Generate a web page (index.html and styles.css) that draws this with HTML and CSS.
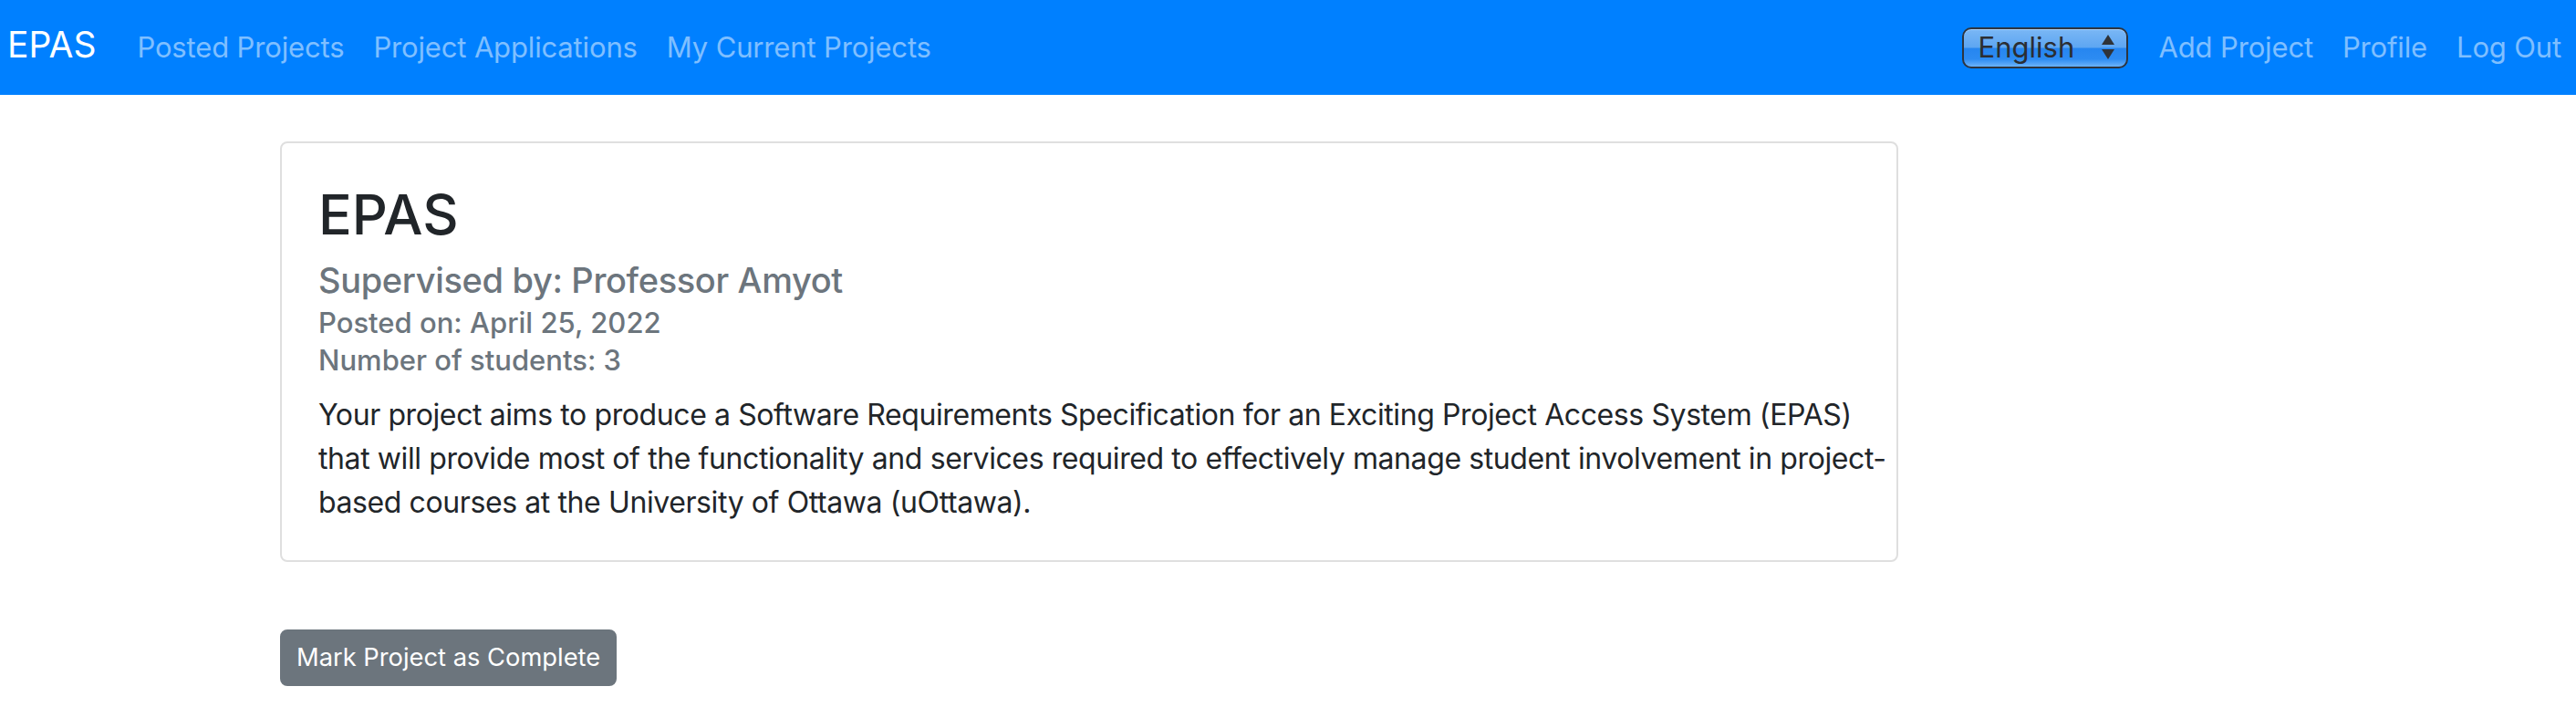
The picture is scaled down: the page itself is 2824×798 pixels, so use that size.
FILE: index.html
```html
<!DOCTYPE html>
<html lang="en">
<head>
<meta charset="utf-8">
<title>EPAS</title>
<link rel="stylesheet" href="styles.css">
</head>
<body>
<nav class="navbar">
  <a class="brand" href="#">EPAS</a>
  <ul class="nav nav-left">
    <li><a class="nav-link" href="#">Posted Projects</a></li>
    <li><a class="nav-link" href="#">Project Applications</a></li>
    <li><a class="nav-link" href="#">My Current Projects</a></li>
  </ul>
  <ul class="nav nav-right">
    <li class="lang-item">
      <div class="lang-select">
        <span class="lang-text">English</span>
        <svg class="lang-arrows" width="16" height="30" viewBox="0 0 16 30" aria-hidden="true">
          <polygon points="8,1 15,12 1,12" fill="#2f3338"/>
          <polygon points="1,17 15,17 8,28" fill="#2f3338"/>
        </svg>
      </div>
    </li>
    <li><a class="nav-link" href="#">Add Project</a></li>
    <li><a class="nav-link" href="#">Profile</a></li>
    <li><a class="nav-link" href="#">Log Out</a></li>
  </ul>
</nav>
<main class="main">
  <div class="card">
    <div class="card-body">
      <h2 class="card-title">EPAS</h2>
      <h5 class="card-subtitle">Supervised by: Professor Amyot</h5>
      <h6 class="card-meta">Posted on: April 25, 2022</h6>
      <h6 class="card-meta card-meta-last">Number of students: 3</h6>
      <p class="card-text">Your project aims to produce a Software Requirements Specification for an Exciting Project Access System (EPAS) that will provide most of the functionality and services required to effectively manage student involvement in project-based courses at the University of Ottawa (uOttawa).</p>
    </div>
  </div>
  <button class="btn-complete" type="button">Mark Project as Complete</button>
</main>
</body>
</html>
```
FILE: styles.css
```css
* { box-sizing: border-box; }
html, body { margin: 0; padding: 0; }
body {
  font-family: Inter, "Noto Sans", "Liberation Sans", sans-serif;
  font-size: 32px;
  line-height: 48px;
  color: #212529;
  background: #fff;
}
.navbar {
  height: 104px;
  background: #0080ff;
  display: flex;
  align-items: center;
  padding: 0 0 0 8px;
}
.brand {
  color: #fff;
  font-size: 39px;
  line-height: 48px;
  text-decoration: none;
  margin-right: 29px;
  margin-bottom: 6px;
}
.nav {
  list-style: none;
  margin: 0;
  padding: 0;
  display: flex;
  align-items: center;
}
.nav-right { margin-left: auto; }
.nav-link {
  display: block;
  padding: 0 16px;
  color: rgba(255,255,255,.5);
  text-decoration: none;
  font-size: 31px;
  letter-spacing: -0.15px;
  line-height: 48px;
}
.lang-item { margin-right: 18px; }
.lang-select {
  width: 182px;
  height: 45px;
  border: 2px solid #2d3540;
  border-radius: 10px;
  display: flex;
  align-items: center;
  justify-content: space-between;
  padding: 0 12px 0 16px;
  background: linear-gradient(to bottom, #7ab7f5 0%, #5ea6f2 48%, #2686f0 52%, #2d8cf2 80%, #6bb3fa 100%);
  box-shadow: inset 0 1px 0 rgba(255,255,255,.35);
}
.lang-text {
  color: #2b2e33;
  font-size: 31px;
  line-height: 40px;
}
.lang-arrows { display: block; }
.main {
  padding: 51px 0 0 307px;
}
.card {
  width: 1774px;
  border: 2px solid #dfdfdf;
  border-radius: 8px;
  background: #fff;
}
.card-body { padding: 40px 10px 39px 40px; }
.card-title {
  margin: 0 0 10px;
  font-size: 61px;
  line-height: 76px;
  font-weight: 500;
  color: #212529;
}
.card-subtitle {
  margin: 0 0 2px;
  font-size: 38px;
  letter-spacing: -0.35px;
  line-height: 48px;
  font-weight: 500;
  color: #6c757d;
}
.card-meta {
  margin: 0;
  font-size: 31px;
  line-height: 41px;
  font-weight: 500;
  color: #6c757d;
}
.card-meta-last { margin-bottom: 16px; }
.card-text {
  margin: 0;
  font-size: 32px;
  letter-spacing: -0.4px;
  line-height: 48px;
  color: #212529;
}
.btn-complete {
  margin-top: 74px;
  display: inline-block;
  height: 62px;
  padding: 0 16px;
  border: 2px solid #6c757d;
  border-radius: 8px;
  background: #6c757d;
  color: #fff;
  font-family: Inter, "Noto Sans", "Liberation Sans", sans-serif;
  font-size: 27.3px;
  line-height: 42px;
}
```
